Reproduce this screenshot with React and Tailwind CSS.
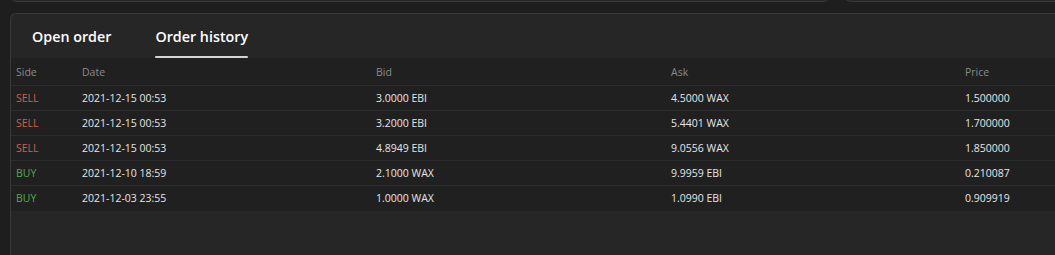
const rows = [
  { side: "SELL", date: "2021-12-15 00:53", bid: "3.0000 EBI", ask: "4.5000 WAX", price: "1.500000" },
  { side: "SELL", date: "2021-12-15 00:53", bid: "3.2000 EBI", ask: "5.4401 WAX", price: "1.700000" },
  { side: "SELL", date: "2021-12-15 00:53", bid: "4.8949 EBI", ask: "9.0556 WAX", price: "1.850000" },
  { side: "BUY", date: "2021-12-10 18:59", bid: "2.1000 WAX", ask: "9.9959 EBI", price: "0.210087" },
  { side: "BUY", date: "2021-12-03 23:55", bid: "1.0000 WAX", ask: "1.0990 EBI", price: "0.909919" },
];

const cols = "grid grid-cols-[66px_294px_295px_294px_1fr] items-center pl-[5px]";

export default function App() {
  return (
    <div className="h-[255px] w-[1055px] overflow-hidden bg-[#1e1e1e] font-['Open_Sans',sans-serif]">
      <div className="flex gap-[15px] pl-[10px] -mt-[10px]">
        <div className="h-[12px] w-[820px] rounded-b-md border border-[#393939] bg-[#262626]" />
        <div className="h-[12px] flex-1 rounded-bl-md border border-r-0 border-[#393939] bg-[#262626]" />
      </div>
      <div className="ml-[10px] mt-[11px] h-[260px] rounded-tl-md border border-r-0 border-[#393939] bg-[#262626]">
        <div className="flex gap-[44px] px-[21px] pt-[12px]">
          <button className="pb-[11px] text-[14.3px] font-semibold text-white">Open order</button>
          <button className="relative pb-[11px] text-[14.3px] font-semibold text-white">
            Order history
            <span className="absolute bottom-0 left-0 h-[2px] w-full rounded-full bg-[#d4d4d4]" />
          </button>
        </div>
        <div className="bg-[#202020] pt-[1px] text-[10.5px]">
          <div className={`${cols} h-[27px] border-b border-[#2c2c2c] text-[#8a8a8a]`}>
            <span>Side</span>
            <span>Date</span>
            <span>Bid</span>
            <span>Ask</span>
            <span>Price</span>
          </div>
          {rows.map((r, i) => (
            <div key={i} className={`${cols} h-[25px] border-b border-[#2c2c2c] text-[#e6e6e6] last:border-b-0`}>
              <span className={r.side === "SELL" ? "text-[#d0604c]" : "text-[#4caf50]"}>{r.side}</span>
              <span>{r.date}</span>
              <span>{r.bid}</span>
              <span>{r.ask}</span>
              <span>{r.price}</span>
            </div>
          ))}
        </div>
      </div>
    </div>
  );
}
